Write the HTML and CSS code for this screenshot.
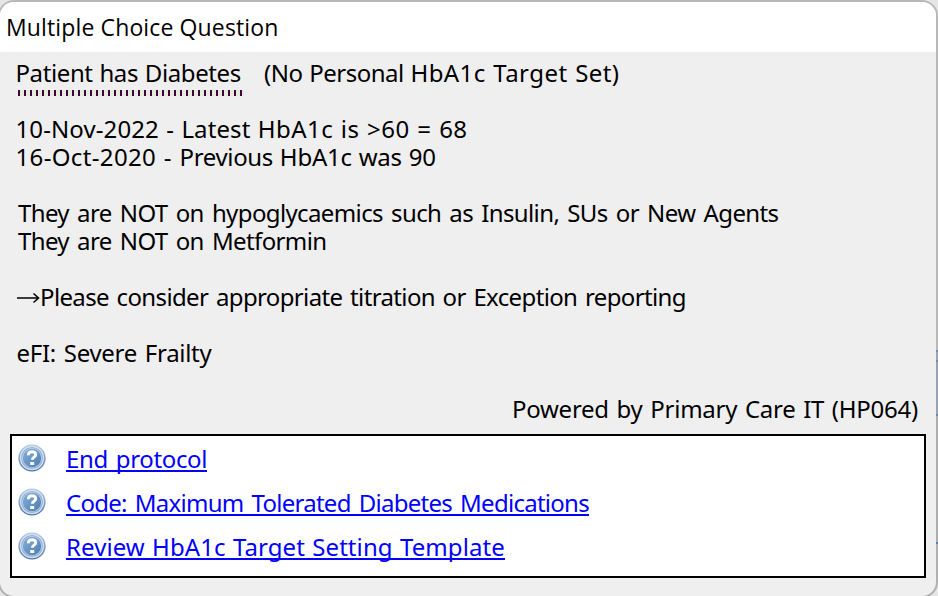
FILE: index.html
```
<!DOCTYPE html>
<html lang="en">
<head>
<meta charset="utf-8">
<title>Multiple Choice Question</title>
<link rel="stylesheet" href="styles.css">
</head>
<body>
<svg class="defs" width="0" height="0" aria-hidden="true">
  <defs>
    <linearGradient id="ring" x1="0" y1="0" x2="0" y2="1"><stop offset="0" stop-color="#b5cdec"/><stop offset="1" stop-color="#4672a8"/></linearGradient>
    <linearGradient id="disc" x1="0" y1="0" x2="1" y2="1"><stop offset="0" stop-color="#86b0dc"/><stop offset="1" stop-color="#4d7cb0"/></linearGradient>
    <symbol id="help" viewBox="0 0 28 28">
      <circle cx="14" cy="14" r="13.6" fill="url(#ring)"/>
      <circle cx="14" cy="14" r="12.2" fill="#d5e2f2"/>
      <circle cx="14" cy="14" r="10.8" fill="#8aabd0"/>
      <circle cx="14" cy="14" r="10" fill="#c3d5ea"/>
      <circle cx="14" cy="14" r="9.2" fill="url(#disc)"/>
      <path d="M10.4 11.2C10.4 8.900 11.8 7.7 14 7.7s3.7 1.2 3.7 3c0 2.400-3.300 2.400-3.300 5" fill="none" stroke="#fff" stroke-width="3"/>
      <path d="M12.2 18h4v3h-4z" fill="#fff"/>
    </symbol>
  </defs>
</svg>
<div class="frame">
  <main class="window">
    <header class="titlebar"><h1>Multiple Choice Question</h1></header>
    <section class="message">
      <div class="line first"><span class="condition">Patient has Diabetes</span><span class="target"><span class="tight">(No Personal </span>HbA1c Target Set)</span></div>
      <div class="line latest"><span class="lead">10-Nov-2022 - Latest </span>HbA1c is &gt;60 = 68</div>
      <div class="line previous"><span class="lead">16-Oct-2020 - </span><span class="tight">Previous </span>HbA1c was 90</div>
      <div class="line gap agents">They are NOT on hypoglycaemics such as Insulin, SUs or New Agents</div>
      <div class="line metformin">They are NOT on Metformin</div>
      <div class="line gap advice"><svg class="arrow" width="23" height="12" viewBox="0 0 23 12"><path d="M0 6h21M16.5 1.5L21.5 6l-5 4.500" fill="none" stroke="#000" stroke-width="1.6"/></svg><span>Please consider appropriate titration or Exception reporting</span></div>
      <div class="line gap frailty">eFI: Severe Frailty</div>
      <div class="line gap credit">Powered by Primary Care IT (HP064)</div>
    </section>
    <nav class="options">
      <div class="option"><svg class="icon"><use href="#help"/></svg><a class="end" href="#">End protocol</a></div>
      <div class="option"><svg class="icon"><use href="#help"/></svg><a class="code" href="#">Code: Maximum Tolerated Diabetes Medications</a></div>
      <div class="option"><svg class="icon"><use href="#help"/></svg><a class="review" href="#">Review HbA1c Target Setting Template</a></div>
    </nav>
  </main>
</div>
</body>
</html>
```
FILE: styles.css
```
* { box-sizing: border-box; }
body {
  margin: 0;
  height: 596px;
  overflow: hidden;
  background: #e6e6e6;
  color: #000;
  font: 24px/28px "Noto Sans", sans-serif;
  word-spacing: 1px;
}
.defs { display: block; }
.frame {
  width: 940px;
  height: 598px;
  margin-left: -2px;
  padding: 2px;
  border-radius: 16px;
  background: linear-gradient(#b8b8b8 350px, #7c8ba8 350px 352px, #9aa5b8 352px 360px, #7c8ba8 360px 362px, #98a2b3 362px 414px, #6f88ad 414px 416px, #adadad 416px 542px, #5f7fae 542px 544px, #b0b0b0 544px);
}
.window {
  height: 594px;
  border-radius: 14px;
  overflow: hidden;
  background: #efefef;
}
.titlebar { height: 50px; padding: 8px 0 0 6px; background: #fff; }
h1 { margin: 0; font: 23px/34px "Open Sans", sans-serif; letter-spacing: 0.13px; word-spacing: 0; }
.message { height: 382px; padding: 7px 18px 0 15.5px; white-space: nowrap; }
.line { height: 28px; }
.gap { margin-top: 28px; }
.first { display: flex; height: 56px; }
.condition {
  width: 228px;
  height: 37px;
  letter-spacing: -0.4px;
  background: repeating-linear-gradient(90deg, #44003f 0 2px, #e4ecdc 2px 6px) 2px 31px / 226px 6px no-repeat;
}
.target { margin-left: 20.5px; letter-spacing: 0.43px; white-space: pre; }
.target .tight { letter-spacing: -0.5px; }
.latest { letter-spacing: 0.45px; }
.latest .lead { letter-spacing: 0.1px; }
.previous { letter-spacing: -0.25px; }
.previous .lead { letter-spacing: 0.36px; }
.previous .tight { letter-spacing: -0.35px; }
.agents, .metformin { padding-left: 2.5px; letter-spacing: -0.62px; word-spacing: 2.5px; }
.advice { display: flex; align-items: center; padding-left: 1.5px; letter-spacing: -0.63px; word-spacing: 2px; }
.arrow { flex: none; margin-top: 1px; }
.frailty { padding-left: 1px; letter-spacing: -0.3px; word-spacing: 2px; }
.credit { text-align: right; letter-spacing: -0.25px; word-spacing: 1.7px; }
.options {
  width: 916px;
  height: 144px;
  margin-left: 10px;
  padding-left: 6px;
  border: 2px solid #000;
  background: #fff;
}
.option { display: flex; height: 44px; }
.icon { width: 28px; height: 28px; margin: 8px 20px 0 0; }
a { height: 28px; margin-top: 8px; padding-top: 1px; border-bottom: 2px solid #00f; color: #00f; text-decoration: none; white-space: nowrap; }
.end { letter-spacing: -0.35px; word-spacing: 2px; }
.code { letter-spacing: -0.73px; word-spacing: 2.5px; }
.review { letter-spacing: 0.08px; }
```
